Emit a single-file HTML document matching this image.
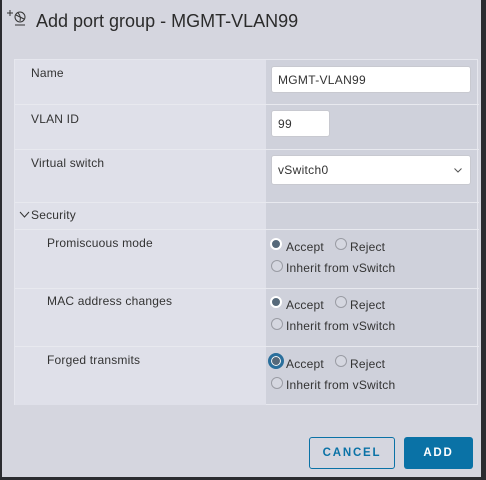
<!DOCTYPE html>
<html><head><style>
*{box-sizing:border-box;margin:0;padding:0}
body{width:486px;height:480px;background:#2b2c30;font-family:"Liberation Sans",sans-serif;position:relative;overflow:hidden}
.dlg{position:absolute;left:2px;top:0;width:479px;height:477px;background:#d5d6df}
.title{position:absolute;left:34px;top:11px;font-size:18px;color:#2b2b2b}
.tbl{position:absolute;left:14px;top:59px;width:464px;height:346px;background:#cfd1db;border:1px solid #e6e7ee}
.l{position:absolute;left:0;width:251px;background:#dfe0e9}
.hr{position:absolute;left:0;width:464px;height:1px;background:#e8e9ef}
.lbl{position:absolute;font-size:12px;color:#333;letter-spacing:0.2px}
.inp{position:absolute;background:#fff;border:1px solid #c8c9d0;border-radius:3px;font-size:12px;color:#333;padding-left:6px;display:flex;align-items:center;letter-spacing:0.3px}
.r{position:absolute;width:12px;height:12px;border-radius:50%;border:1px solid #9a9ca4;background:#d5d7e0}
.r.on{background:#56697a;border:2px solid #fff}
.t{position:absolute;font-size:12px;color:#333;letter-spacing:0.2px}
.btn{position:absolute;height:32px;border-radius:3px;font-size:11.5px;font-weight:bold;letter-spacing:1.8px;display:flex;align-items:center;justify-content:center}
</style></head><body>
<div class="dlg">
<svg style="position:absolute;left:5px;top:8px" width="22" height="20" viewBox="0 0 22 20" fill="none" stroke="#333" stroke-width="1"><path d="M0 5H6M3 2V8"/><circle cx="13" cy="9" r="5"/><path d="M9 7l8 4M11 5c2 2 3 4 2 8"/><path d="M8 17H18"/></svg>
<div class="title">Add port group - MGMT-VLAN99</div>
<div class="btn" style="left:307px;top:437px;width:86px;border:1px solid #0a72a6;color:#0a72a6">CANCEL</div>
<div class="btn" style="left:402px;top:437px;width:69px;background:#0a72a6;color:#fff">ADD</div>
</div>
<div class="tbl">
<div class="l" style="top:0;height:345px"></div>
<div class="hr" style="top:44px"></div>
<div class="hr" style="top:89px"></div>
<div class="hr" style="top:142px"></div>
<div class="hr" style="top:169px"></div>
<div class="hr" style="top:228px"></div>
<div class="hr" style="top:286px"></div>
<div class="lbl" style="left:16px;top:6px">Name</div>
<div class="lbl" style="left:16px;top:52px">VLAN ID</div>
<div class="lbl" style="left:16px;top:96px">Virtual switch</div>
<svg style="position:absolute;left:4px;top:151px" width="11" height="8"><path d="M1 1l4.5 5L10 1" stroke="#333" fill="none"/></svg>
<div class="lbl" style="left:16px;top:148px">Security</div>
<div class="lbl" style="left:32px;top:176px">Promiscuous mode</div>
<div class="lbl" style="left:32px;top:234px">MAC address changes</div>
<div class="lbl" style="left:32px;top:293px">Forged transmits</div>
<div class="inp" style="left:256px;top:6px;width:200px;height:27px">MGMT-VLAN99</div>
<div class="inp" style="left:256px;top:50px;width:59px;height:27px">99</div>
<div class="inp" style="left:256px;top:95px;width:200px;height:30px">vSwitch0<svg style="position:absolute;right:8px;top:12px" width="8" height="5"><path d="M0.5 0.5l3.5 3.5 3.5-3.5" stroke="#555" fill="none"/></svg></div>
<div class="r on" style="left:255px;top:178px"></div><div class="t" style="left:271px;top:180px">Accept</div>
<div class="r" style="left:320px;top:178px"></div><div class="t" style="left:335px;top:180px">Reject</div>
<div class="r" style="left:256px;top:200px"></div><div class="t" style="left:271px;top:201px">Inherit from vSwitch</div>
<div class="r on" style="left:255px;top:236px"></div><div class="t" style="left:271px;top:238px">Accept</div>
<div class="r" style="left:320px;top:236px"></div><div class="t" style="left:335px;top:238px">Reject</div>
<div class="r" style="left:256px;top:258px"></div><div class="t" style="left:271px;top:259px">Inherit from vSwitch</div>
<div class="r on" style="left:253px;top:293px;width:16px;height:16px;border:3px solid #2a6f9c;background:#56697a;box-shadow:inset 0 0 0 1px #fff"></div><div class="t" style="left:271px;top:297px">Accept</div>
<div class="r" style="left:320px;top:295px"></div><div class="t" style="left:335px;top:297px">Reject</div>
<div class="r" style="left:256px;top:317px"></div><div class="t" style="left:271px;top:318px">Inherit from vSwitch</div>
</div>
</body></html>
